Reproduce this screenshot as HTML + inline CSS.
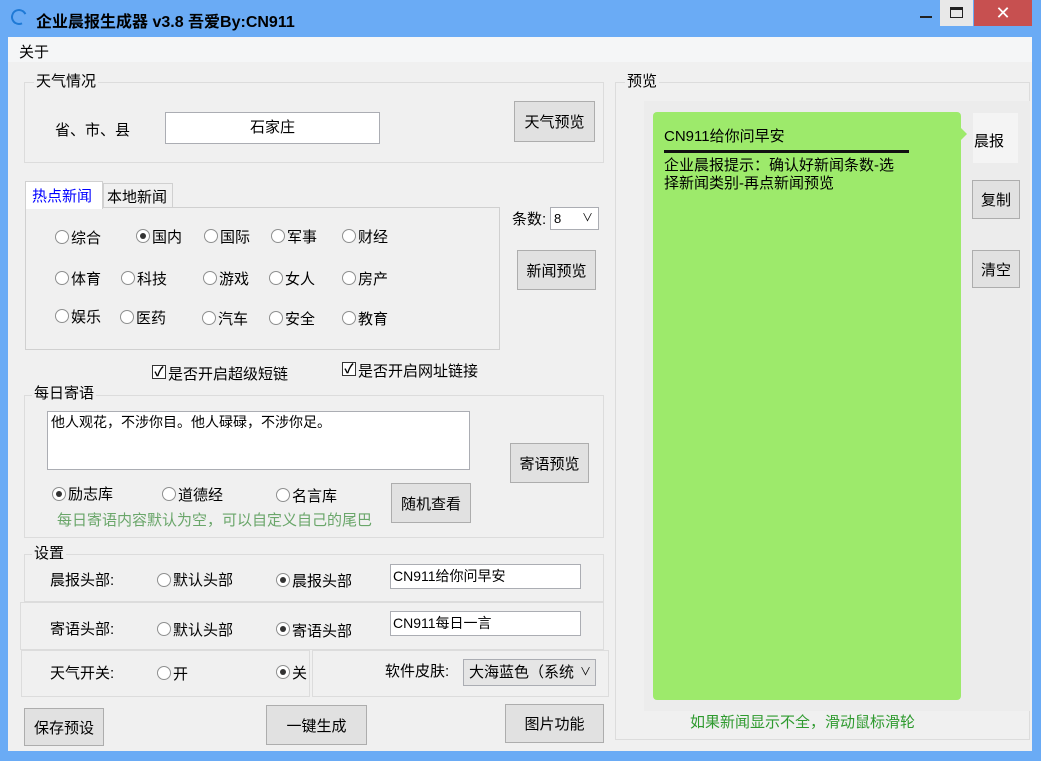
<!DOCTYPE html>
<html><head><meta charset="utf-8"><style>
*{margin:0;padding:0;box-sizing:border-box}
body{width:1041px;height:761px;background:#6aabf5;position:relative;overflow:hidden;font-family:"Liberation Sans","Noto Sans CJK SC",sans-serif;font-size:15px;color:#000}
.a{position:absolute;white-space:nowrap}
.btn{position:absolute;background:#e1e1e1;border:1px solid #adadad;display:flex;align-items:center;justify-content:center;font-size:15px}
.grp{position:absolute;border:1px solid #dcdcdc}
.lbl{position:absolute;background:#f0f0f0;padding:0 2px;font-size:15px;line-height:16px}
.r{position:absolute;width:14px;height:14px;border-radius:50%;border:1px solid #8e8f8f;background:#fff;margin-top:2px}
.r.on::after{content:"";position:absolute;left:3px;top:3px;width:6px;height:6px;border-radius:50%;background:#333}
.in{position:absolute;background:#fff;border:1px solid #abadb3}
.cb{position:absolute;width:14px;height:14px;border:1px solid #333;background:#fff;font-size:13px;line-height:12px;text-align:center;font-weight:bold}
</style></head><body>
<div class="a" style="left:11px;top:9px;width:16px;height:16px;border:2px solid #1f7ad6;border-radius:50%;border-right-color:transparent;transform:rotate(20deg)"></div>
<div class="a" style="left:36px;top:8px;font-size:16px;font-weight:bold">企业晨报生成器 v3.8 吾爱By:CN911</div>
<div class="a" style="left:920px;top:16px;width:12px;height:2px;background:#222"></div>
<div class="a" style="left:940px;top:0;width:33px;height:26px;background:#e8e8e8"></div>
<div class="a" style="left:950px;top:7px;width:13px;height:11px;border:1px solid #222;border-top-width:3px"></div>
<div class="a" style="left:974px;top:0;width:58px;height:26px;background:#c75050;color:#fff;font-size:18px;text-align:center;line-height:26px">✕</div>
<div class="a" style="left:8px;top:37px;width:1024px;height:714px;background:#f0f0f0"></div>
<div class="a" style="left:8px;top:37px;width:1024px;height:25px;background:#f5f6f7"></div>
<div class="a" style="left:19px;top:41px">关于</div>
<div class="grp" style="left:24px;top:82px;width:580px;height:81px"></div>
<div class="lbl" style="left:34px;top:74px">天气情况</div>
<div class="a" style="left:55px;top:119px">省、市、县</div>
<div class="in" style="left:165px;top:112px;width:215px;height:32px;text-align:center;line-height:30px">石家庄</div>
<div class="btn" style="left:514px;top:101px;width:81px;height:41px">天气预览</div>
<div class="grp" style="left:25px;top:207px;width:475px;height:143px;border-color:#d0d0d0"></div>
<div class="a" style="left:25px;top:181px;width:78px;height:28px;background:#fff;border:1px solid #d0d0d0;border-bottom:none"></div>
<div class="a" style="left:32px;top:185px;color:#0000ff">热点新闻</div>
<div class="a" style="left:103px;top:183px;width:70px;height:24px;background:#f0f0f0;border:1px solid #d0d0d0;border-bottom:none"></div>
<div class="a" style="left:107px;top:186px">本地新闻</div>
<div class="r" style="left:55px;top:228px"></div><div class="a" style="left:71px;top:227px">综合</div>
<div class="r on" style="left:136px;top:227px"></div><div class="a" style="left:152px;top:226px">国内</div>
<div class="r" style="left:204px;top:227px"></div><div class="a" style="left:220px;top:226px">国际</div>
<div class="r" style="left:271px;top:227px"></div><div class="a" style="left:287px;top:226px">军事</div>
<div class="r" style="left:342px;top:227px"></div><div class="a" style="left:358px;top:226px">财经</div>
<div class="r" style="left:55px;top:269px"></div><div class="a" style="left:71px;top:268px">体育</div>
<div class="r" style="left:121px;top:269px"></div><div class="a" style="left:137px;top:268px">科技</div>
<div class="r" style="left:203px;top:269px"></div><div class="a" style="left:219px;top:268px">游戏</div>
<div class="r" style="left:269px;top:269px"></div><div class="a" style="left:285px;top:268px">女人</div>
<div class="r" style="left:342px;top:269px"></div><div class="a" style="left:358px;top:268px">房产</div>
<div class="r" style="left:55px;top:307px"></div><div class="a" style="left:71px;top:306px">娱乐</div>
<div class="r" style="left:120px;top:308px"></div><div class="a" style="left:136px;top:307px">医药</div>
<div class="r" style="left:202px;top:309px"></div><div class="a" style="left:218px;top:308px">汽车</div>
<div class="r" style="left:269px;top:309px"></div><div class="a" style="left:285px;top:308px">安全</div>
<div class="r" style="left:342px;top:309px"></div><div class="a" style="left:358px;top:308px">教育</div>
<div class="a" style="left:512px;top:208px">条数:</div>
<div class="in" style="left:550px;top:207px;width:49px;height:23px;font-size:13px;padding-left:3px;line-height:21px">8 <span style="position:absolute;right:5px;font-size:11px">∨</span></div>
<div class="btn" style="left:517px;top:250px;width:79px;height:40px">新闻预览</div>
<div class="cb" style="left:152px;top:365px">✓</div><div class="a" style="left:168px;top:363px">是否开启超级短链</div>
<div class="cb" style="left:342px;top:362px">✓</div><div class="a" style="left:358px;top:360px">是否开启网址链接</div>
<div class="grp" style="left:24px;top:395px;width:580px;height:143px"></div>
<div class="lbl" style="left:32px;top:386px">每日寄语</div>
<div class="in" style="left:47px;top:411px;width:423px;height:59px;padding:1px 3px;font-size:14px;line-height:18px">他人观花，不涉你目。他人碌碌，不涉你足。</div>
<div class="btn" style="left:510px;top:443px;width:79px;height:40px">寄语预览</div>
<div class="r on" style="left:52px;top:485px"></div><div class="a" style="left:68px;top:483px">励志库</div>
<div class="r" style="left:162px;top:485px"></div><div class="a" style="left:178px;top:484px">道德经</div>
<div class="r" style="left:276px;top:486px"></div><div class="a" style="left:292px;top:485px">名言库</div>
<div class="btn" style="left:391px;top:483px;width:80px;height:40px">随机查看</div>
<div class="a" style="left:57px;top:509px;color:#6aa66a">每日寄语内容默认为空，可以自定义自己的尾巴</div>
<div class="grp" style="left:24px;top:554px;width:580px;height:48px"></div>
<div class="grp" style="left:20px;top:602px;width:584px;height:48px"></div>
<div class="grp" style="left:21px;top:650px;width:289px;height:47px"></div>
<div class="grp" style="left:312px;top:650px;width:297px;height:47px"></div>
<div class="lbl" style="left:32px;top:546px">设置</div>
<div class="a" style="left:50px;top:569px">晨报头部:</div>
<div class="r" style="left:157px;top:571px"></div><div class="a" style="left:173px;top:569px">默认头部</div>
<div class="r on" style="left:276px;top:571px"></div><div class="a" style="left:292px;top:570px">晨报头部</div>
<div class="in" style="left:390px;top:564px;width:191px;height:25px;font-size:14px;padding-left:2px;line-height:22px">CN911给你问早安</div>
<div class="a" style="left:50px;top:618px">寄语头部:</div>
<div class="r" style="left:157px;top:620px"></div><div class="a" style="left:173px;top:619px">默认头部</div>
<div class="r on" style="left:276px;top:620px"></div><div class="a" style="left:292px;top:620px">寄语头部</div>
<div class="in" style="left:390px;top:611px;width:191px;height:25px;font-size:14px;padding-left:2px;line-height:22px">CN911每日一言</div>
<div class="a" style="left:50px;top:662px">天气开关:</div>
<div class="r" style="left:157px;top:664px"></div><div class="a" style="left:173px;top:663px">开</div>
<div class="r on" style="left:276px;top:663px"></div><div class="a" style="left:292px;top:662px">关</div>
<div class="a" style="left:385px;top:660px">软件皮肤:</div>
<div class="in" style="left:463px;top:659px;width:133px;height:27px;background:#e5e5e5;padding-left:5px;line-height:25px">大海蓝色（系统 <span style="position:absolute;right:4px;font-size:11px;background:#e5e5e5;padding-left:4px">∨</span></div>
<div class="btn" style="left:24px;top:708px;width:80px;height:38px">保存预设</div>
<div class="btn" style="left:266px;top:705px;width:101px;height:40px">一键生成</div>
<div class="btn" style="left:505px;top:704px;width:99px;height:39px">图片功能</div>
<div class="grp" style="left:615px;top:82px;width:415px;height:658px"></div>
<div class="lbl" style="left:625px;top:74px">预览</div>
<div class="a" style="left:644px;top:101px;width:386px;height:610px;background:#ececec"></div>
<div class="a" style="left:653px;top:112px;width:308px;height:588px;background:#9dea6b;border-radius:4px"></div>
<div class="a" style="left:961px;top:128px;width:0;height:0;border:6px solid transparent;border-left-color:#9dea6b"></div>
<div class="a" style="left:664px;top:125px;font-size:15px">CN911给你问早安</div>
<div class="a" style="left:664px;top:150px;width:245px;height:3px;background:#111"></div>
<div class="a" style="left:664px;top:157px;font-size:15px;line-height:18px">企业晨报提示：确认好新闻条数-选<br>择新闻类别-再点新闻预览</div>
<div class="a" style="left:973px;top:113px;width:45px;height:50px;background:#f4f4f4"></div>
<div class="a" style="left:974px;top:130px">晨报</div>
<div class="btn" style="left:972px;top:180px;width:48px;height:39px">复制</div>
<div class="btn" style="left:972px;top:250px;width:48px;height:38px">清空</div>
<div class="a" style="left:690px;top:711px;color:#2e9a2e">如果新闻显示不全，滑动鼠标滑轮</div>
</body></html>
